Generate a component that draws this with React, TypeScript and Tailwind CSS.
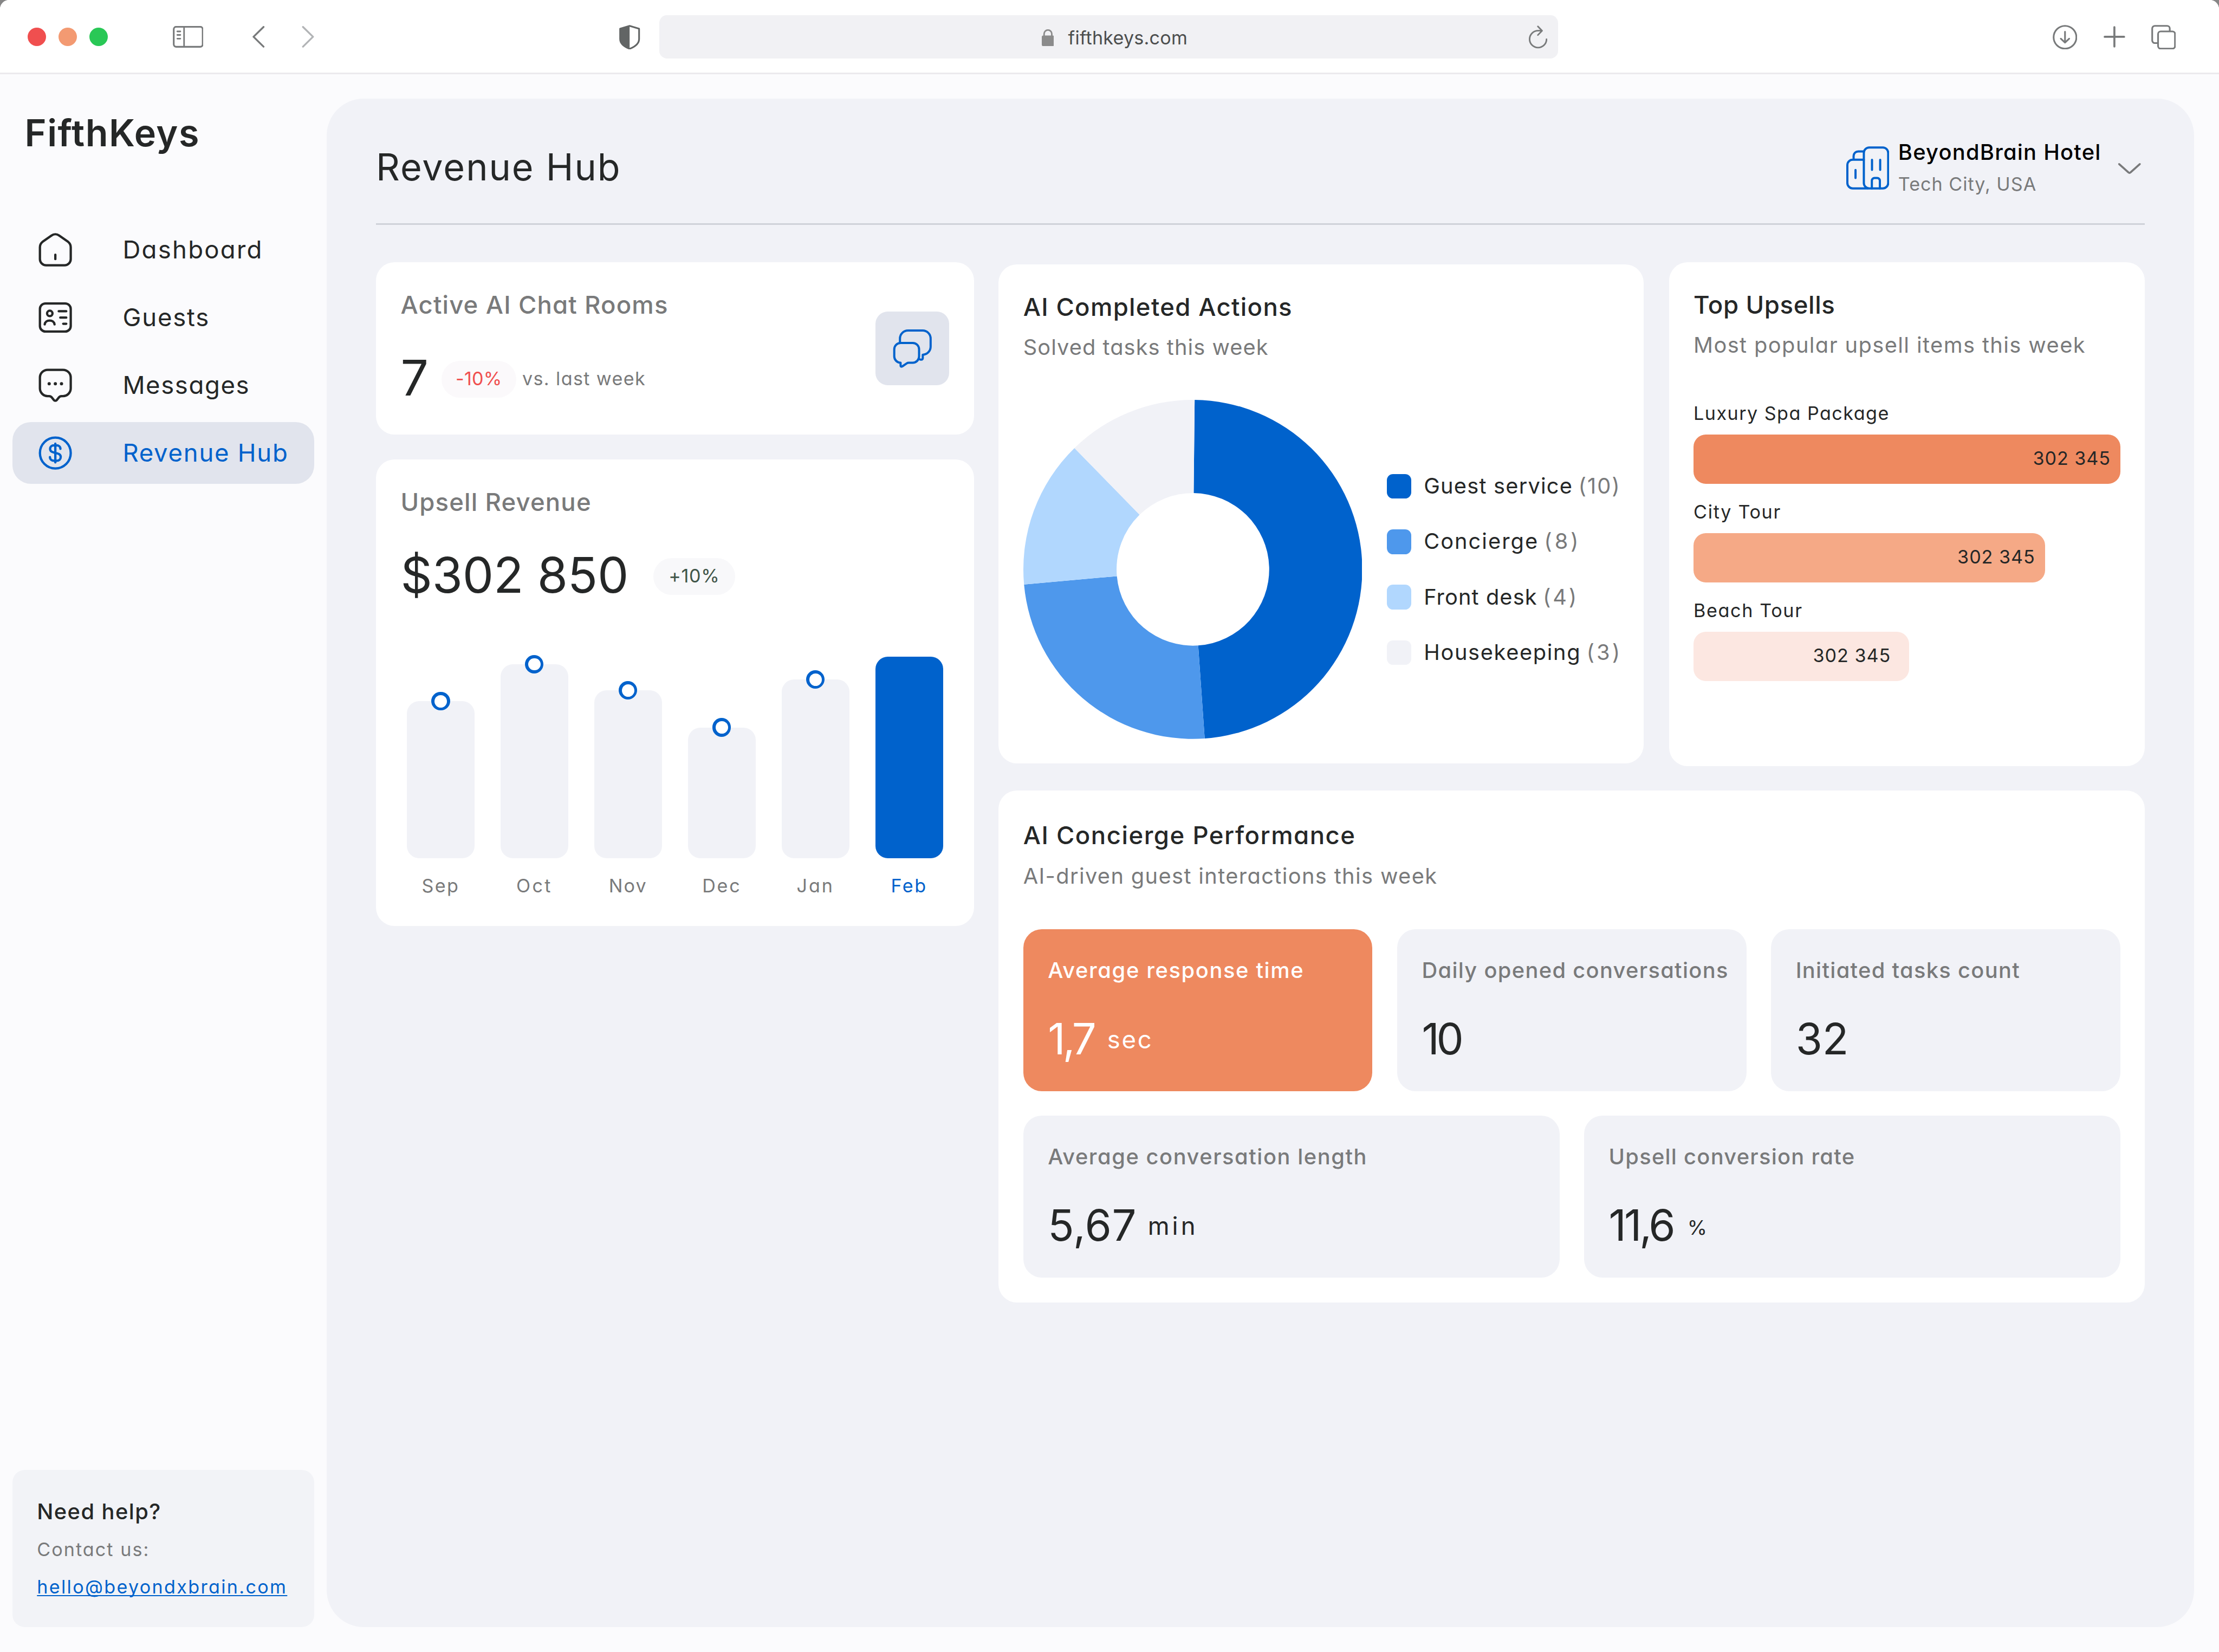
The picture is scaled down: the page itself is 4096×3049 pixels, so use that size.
import React from "react";

const months = [
  { name: "Sep", bar: "h-[102px]", label: "tracking-[0.07em]" },
  { name: "Oct", bar: "h-[126px]", label: "tracking-[0.1em]" },
  { name: "Nov", bar: "h-[109px]", label: "tracking-[0.065em]" },
  { name: "Dec", bar: "h-[85px]", label: "tracking-[0.08em]" },
  { name: "Jan", bar: "h-[116px]", label: "tracking-[0.085em]" },
  { name: "Feb", bar: "h-[131px]", label: "tracking-[0.075em]", current: true },
];

const actions = [
  { name: "Guest service", count: "(10)", swatch: "bg-[#0062cc]", text: "tracking-[0.030em]", num: "tracking-[0.050em]" },
  { name: "Concierge", count: "(8)", swatch: "bg-[#4e98ec]", text: "tracking-[0.050em]", num: "tracking-[0.120em]" },
  { name: "Front desk", count: "(4)", swatch: "bg-[#b1d7fe]", text: "tracking-[0.027em]", num: "tracking-[0.095em]" },
  { name: "Housekeeping", count: "(3)", swatch: "bg-[#f1f2f7]", text: "tracking-[0.041em]", num: "tracking-[0.100em]" },
];

const upsells = [
  { name: "Luxury Spa Package", text: "tracking-[0.043em]", bar: "w-[277px] bg-[#ee895f] pr-[6.300px]" },
  { name: "City Tour", text: "tracking-[0.050em]", bar: "w-[228px] bg-[#f5a986] pr-[6.300px]" },
  { name: "Beach Tour", text: "tracking-[0.048em]", bar: "w-[140px] bg-[#fce7e1] pr-[12px]" },
];

const slices = [
  { from: 0.6, to: 176, color: "#0062cc" },
  { from: 176, to: 264.9, color: "#4e98ec" },
  { from: 264.9, to: 315.7, color: "#b1d7fe" },
  { from: 315.7, to: 360.6, color: "#f1f2f7" },
];

function slicePath(from: number, to: number) {
  const p = (deg: number, r: number) => {
    const a = (deg * Math.PI) / 180;
    return `${(110 + r * Math.sin(a)).toFixed(2)} ${(110 - r * Math.cos(a)).toFixed(2)}`;
  };
  const big = to - from > 180 ? 1 : 0;
  return `M${p(from, 110)}A110 110 0 ${big} 1 ${p(to, 110)}L${p(to, 49.5)}A49.5 49.5 0 ${big} 0 ${p(from, 49.5)}Z`;
}

function BrowserBar() {
  return (
    <header className="flex flex-col h-12 bg-white rounded-t-[6px] shrink-0">
      <div className="flex items-center h-[47px] pt-px pl-[18px] pr-7 text-[#787a7b]">
        <div className="flex gap-2">
          <i className="size-3 rounded-full bg-[#f04f4f]" />
          <i className="size-3 rounded-full bg-[#f39a72]" />
          <i className="size-3 rounded-full bg-[#29c856]" />
        </div>
        <svg className="ml-[42px] w-5 h-[14px]" viewBox="0 0 20 14" fill="none" stroke="currentColor">
          <rect x=".6" y=".5" width="18.8" height="13" rx="1.6" strokeWidth="1.1" />
          <path d="M7.3.5v13" />
          <path d="M2.9 3.5h2M2.9 5.8h2M2.9 8.2h2" strokeLinecap="round" />
        </svg>
        <svg className="ml-8 w-2 h-[14px]" viewBox="0 0 8 14" fill="none" stroke="currentColor" strokeWidth="1.2" strokeLinecap="round" strokeLinejoin="round">
          <path d="M7.2.6.7 7l6.5 6.4" />
        </svg>
        <svg className="ml-6 w-2 h-[14px] text-[#b2b4b6]" viewBox="0 0 8 14" fill="none" stroke="currentColor" strokeWidth="1.2" strokeLinecap="round" strokeLinejoin="round">
          <path d="M.8.6 7.3 7 .8 13.4" />
        </svg>
        <svg className="ml-[198px] w-[13.5px] h-4" viewBox="0 0 13.5 16" fill="none" stroke="#626565" strokeLinejoin="round">
          <path d="M6.75.6 12.9 2.5v6.6c0 2.6-2.4 4.9-6.15 6.4C3 14 .6 11.7.6 9.1V2.5z" strokeWidth="1.1" />
          <path d="M6.75.6.6 2.5v6.6c0 2.6 2.4 4.9 6.15 6.4z" fill="#626565" stroke="none" />
        </svg>
        <div className="ml-[12.5px] w-[583px] h-7 rounded-[5px] bg-[#f1f1f4] flex items-center pl-[248px] pr-[7px]">
          <svg className="w-2 h-[11px] mt-px" viewBox="0 0 8 11" fill="none">
            <rect y="4" width="8" height="7" rx="1" fill="#8b8b8b" />
            <path d="M1.5 4.5V3a2.5 2.5 0 0 1 5 0v1.5" stroke="#8b8b8b" />
          </svg>
          <span className="ml-[9.2px] pt-px text-[12px] leading-4 tracking-[0.006em] text-[#4c4e4e] [font-feature-settings:normal]">fifthkeys.com</span>
          <svg className="ml-auto w-3 h-[15px]" viewBox="0 0 12 15" fill="none" stroke="#787a7b" strokeWidth="1" strokeLinecap="round" strokeLinejoin="round">
            <path d="M11.5 8.9A5.5 5.5 0 1 1 6 3.4h2.4M5.9.6l2.7 2.8-2.7 2.8" />
          </svg>
        </div>
        <svg className="ml-auto size-4" viewBox="0 0 16 16" fill="none" stroke="currentColor" strokeWidth="1.1" strokeLinecap="round" strokeLinejoin="round">
          <circle cx="8" cy="8" r="7.4" />
          <path d="M8 4.4v7M5.3 8.9 8 11.5l2.7-2.6" />
        </svg>
        <svg className="ml-[17px] size-[14px]" viewBox="0 0 14 14" stroke="currentColor" strokeWidth="1.3" strokeLinecap="round">
          <path d="M7 .7v12.6M.7 7h12.6" />
        </svg>
        <svg className="ml-[17px] size-4" viewBox="0 0 16 16" fill="none" stroke="currentColor" strokeWidth="1.1">
          <rect x="4.4" y="4.2" width="11" height="11.2" rx="1.7" />
          <path d="M4.4 11.8H2.3A1.7 1.7 0 0 1 .6 10.1V2.3A1.7 1.7 0 0 1 2.3.6h8A1.7 1.7 0 0 1 12 2.3v1.900" />
        </svg>
      </div>
      <div className="h-px bg-[#ebeaed]" />
    </header>
  );
}

const iconProps = {
  className: "size-6",
  viewBox: "0 0 24 24",
  fill: "none",
  stroke: "currentColor",
  strokeWidth: 1.5,
  strokeLinecap: "round" as const,
  strokeLinejoin: "round" as const,
};

function HomeIcon() {
  return (
    <svg {...iconProps}>
      <path d="M2 10.4c0-1.600.5-2.7 1.7-3.6l5.8-4.1c1.5-1.05 3.5-1.05 5 0l5.8 4.1c1.2.9 1.7 2 1.7 3.6V18a4 4 0 0 1-4 4H6a4 4 0 0 1-4-4z" />
      <path d="M12 15.2V18" />
    </svg>
  );
}

function GuestsIcon() {
  return (
    <svg {...iconProps}>
      <rect x="2" y="2.85" width="20" height="18.2" rx="3.6" />
      <circle cx="8.4" cy="9.3" r="1.75" />
      <path d="M5.1 16.4c.2-1.6 1.5-2.5 3.2-2.5s3 .9 3.2 2.5M14.2 7.9h4.9M15.2 12h3.9M17.1 16h2" />
    </svg>
  );
}

function MessagesIcon() {
  return (
    <svg {...iconProps}>
      <path d="M2 7a5 5 0 0 1 5-5h10a5 5 0 0 1 5 5v7a5 5 0 0 1-5 5h-.9c-.9 0-1.5.3-1.9 1L13 21.5c-.5.7-1.5.7-2 0L9.8 20c-.4-.7-1-1-1.9-1H7a5 5 0 0 1-5-5z" />
      <path d="M8 11h.01M12 11h.01M16 11h.01" strokeWidth="2.1" />
    </svg>
  );
}

function RevenueIcon() {
  return (
    <svg {...iconProps}>
      <circle cx="12" cy="12" r="10" />
      <path d="M15.3 9.3c0-1.5-1.2-2.3-2.6-2.3h-1.4C9.7 7 8.6 7.9 8.6 9.3c0 1.3.8 1.9 2 2.2l2.9.8c1.2.3 2 1 2 2.3 0 1.5-1.2 2.4-2.6 2.4h-1.7c-1.5 0-2.7-.9-2.7-2.4M12 5.9v12.2" />
    </svg>
  );
}

function Sidebar() {
  return (
    <aside className="w-[196px] shrink-0 flex flex-col">
      <div className="mt-[4.3px] pl-2 text-2xl leading-9 font-semibold tracking-[0.022em]">FifthKeys</div>
      <nav className="mt-[37.7px] flex flex-col gap-1 text-base whitespace-nowrap">
        <a className="flex items-center gap-8 h-10 pl-4 rounded-xl"><HomeIcon /><span className="-ml-[0.4px] tracking-[0.050em]">Dashboard</span></a>
        <a className="flex items-center gap-8 h-10 pl-4 rounded-xl"><GuestsIcon /><span className="-ml-[0.4px] tracking-[0.040em]">Guests</span></a>
        <a className="flex items-center gap-8 h-10 pl-4 rounded-xl"><MessagesIcon /><span className="-ml-[0.4px] tracking-[0.035em]">Messages</span></a>
        <a className="flex items-center gap-8 h-10 pl-4 rounded-xl bg-[#e1e4ed] text-[#0062cc]"><RevenueIcon /><span className="-ml-[0.4px] tracking-[0.038em]">Revenue Hub</span></a>
      </nav>
      <div className="mt-auto h-[102px] p-4 rounded-lg bg-[#f2f3f7]">
        <div className="text-sm leading-[22px] font-medium tracking-[0.036em]">Need help?</div>
        <div className="mt-[4.6px] text-xs leading-[18px] tracking-[0.060em] text-[#797a7b]">Contact us:</div>
        <div className="mt-1.5 text-xs leading-[18px] tracking-[0.068em] whitespace-nowrap text-[#0062cc] underline decoration-[0.7px] underline-offset-[1.2px] [text-decoration-skip-ink:none]">hello@beyondxbrain.com</div>
      </div>
    </aside>
  );
}

function PageHeader() {
  return (
    <div>
      <div className="flex items-center justify-between h-[81px] pt-[9px]">
        <h1 className="pb-px text-2xl leading-9 tracking-[0.029em]">Revenue Hub</h1>
        <div className="flex items-center mr-0.5">
          <svg className="size-7" viewBox="0 0 28 28" fill="none" stroke="#0062cc" strokeWidth="1.4" strokeLinecap="round" strokeLinejoin="round">
            <rect x="11.4" y=".8" width="15.8" height="26.5" rx="3.5" />
            <path d="M14 27.3H4.2a3.5 3.5 0 0 1-3.5-3.5V12.2a3.5 3.5 0 0 1 3.5-3.5h7.2M4.75 8.7V6.3a3 3 0 0 1 3-3h3.65" />
            <path d="M16.7 8.8v6.5M22 8.8v6.5M6 15.4v5.2M16.6 27.3v-5a1.7 1.7 0 0 1 1.7-1.7h1.8a1.7 1.7 0 0 1 1.7 1.7v5" />
          </svg>
          <div className="ml-[5.8px] w-[132px] pt-px whitespace-nowrap">
            <div className="text-sm leading-5 font-medium tracking-[0.031em] text-black">BeyondBrain Hotel</div>
            <div className="text-xs leading-[21px] tracking-[0.029em] text-[#797a7b]">Tech City, USA</div>
          </div>
          <svg className="ml-[10.2px] mt-px w-4 h-2" viewBox="0 0 16 8" fill="none" stroke="#797a7b" strokeWidth="1.3" strokeLinecap="round" strokeLinejoin="round">
            <path d="m1.3 1 6 5.4q.7.6 1.4 0l6-5.4" />
          </svg>
        </div>
      </div>
      <div className="h-px bg-[#cfd2d9]" />
    </div>
  );
}

function ChatRooms() {
  return (
    <section className="flex justify-between items-center h-28 px-4 rounded-xl bg-white">
      <div className="self-start pt-4">
        <h2 className="text-base leading-6 font-medium tracking-[0.025em] text-[#797a7b]">Active AI Chat Rooms</h2>
        <div className="mt-6 flex items-center h-6">
          <span className="w-[26.5px] pb-[1.5px] text-[32px] leading-none">7</span>
          <span className="w-[48.4px] h-6 pb-px rounded-full bg-[#fbf9fb] flex items-center justify-center text-xs tracking-[0.006em] text-[#f04f4f]">-10%</span>
          <span className="ml-1 pb-px text-xs tracking-[0.040em] text-[#797a7b]">vs. last week</span>
        </div>
      </div>
      <div className="size-12 rounded-lg bg-[#e1e4ed]">
        <svg className="size-12" viewBox="0 0 48 48" fill="none" stroke="#0062cc" strokeWidth="1.4" strokeLinecap="round" strokeLinejoin="round">
          <path d="M16.3 33.2a4.1 4.1 0 0 1-4.1-4.1v-4.6a4.1 4.1 0 0 1 4.1-4.1h7.9a4.1 4.1 0 0 1 4.1 4.1v4.6a4.1 4.1 0 0 1-4.1 4.1h-2.6q-.7 0-1.3.4l-2.9 2q-1.1.5-1.1-.6z" />
          <path d="M15.9 20.4v-2.9a5.2 5.2 0 0 1 5.2-5.2h9.5a5.2 5.2 0 0 1 5.2 5.2v5.3a5.2 5.2 0 0 1-5.1 5.2v2.2q0 1.2-1.2 1h-.3l-1.2-.5" />
        </svg>
      </div>
    </section>
  );
}

function UpsellRevenue() {
  return (
    <section className="h-[303px] pt-4 rounded-xl bg-white">
      <h2 className="px-4 text-base leading-6 font-medium tracking-[0.025em] text-[#797a7b]">Upsell Revenue</h2>
      <div className="mt-6 px-4 flex items-center h-6">
        <span className="w-[164px] pb-[1.5px] text-[32px] leading-none tracking-[-0.002em]">$302 850</span>
        <span className="w-[53px] h-6 pb-px rounded-full bg-[#f8f8fa] flex items-center justify-center text-xs tracking-[0.022em] text-[#3f5548]">+10%</span>
      </div>
      <div className="mt-10 px-5 flex justify-between items-end h-[131px]">
        {months.map((m) => (
          <div key={m.name} className={`relative w-11 rounded-lg ${m.bar} ${m.current ? "bg-[#0062cc]" : "bg-[#f1f2f7]"}`}>
            {!m.current && <i className="absolute left-4 -top-1.5 size-3 rounded-full bg-[#0062cc] p-0.5"><i className="block size-2 rounded-full bg-white" /></i>}
          </div>
        ))}
      </div>
      <div className="mt-[8.6px] px-5 flex justify-between">
        {months.map((m) => (
          <span key={m.name} className={`w-11 text-center text-xs leading-[18px] ${m.label} ${m.current ? "text-[#0062cc]" : "text-[#797a7b]"}`}>{m.name}</span>
        ))}
      </div>
    </section>
  );
}

function CompletedActions() {
  return (
    <section className="w-[418.6px] h-[324px] p-4 rounded-xl bg-white">
      <h2 className="text-base leading-6 font-medium tracking-[0.029em]">AI Completed Actions</h2>
      <p className="mt-1 text-sm leading-5 tracking-[0.026em] text-[#797a7b]">Solved tasks this week</p>
      <div className="mt-6 flex items-center gap-4">
        <svg className="size-[220px] shrink-0" viewBox="0 0 220 220">
          {slices.map((s) => (
            <path key={s.color} d={slicePath(s.from, s.to)} fill={s.color} />
          ))}
        </svg>
        <ul className="flex flex-col gap-5 text-sm">
          {actions.map((a) => (
            <li key={a.name} className="flex items-center h-4 whitespace-nowrap">
              <i className={`size-4 shrink-0 rounded ${a.swatch}`} />
              <span className={`ml-2 ${a.text}`}>{a.name}</span>
              <span className={`ml-[3.6px] text-[#797a7b] ${a.num}`}>{a.count}</span>
            </li>
          ))}
        </ul>
      </div>
    </section>
  );
}

function TopUpsells() {
  return (
    <section className="w-[309px] h-[327px] p-4 rounded-xl bg-white">
      <h2 className="text-base leading-6 font-medium tracking-[0.014em]">Top Upsells</h2>
      <p className="mt-1 mb-4 text-sm leading-5 tracking-[0.035em] whitespace-nowrap text-[#797a7b]">Most popular upsell items this week</p>
      {upsells.map((u) => (
        <div key={u.name}>
          <div className={`pt-[9px] pb-[5px] text-xs leading-[18px] ${u.text}`}>{u.name}</div>
          <div className={`flex items-center justify-end h-8 pb-px rounded-lg text-xs tracking-[0.028em] ${u.bar}`}>302 345</div>
        </div>
      ))}
    </section>
  );
}

type TileProps = {
  label: string;
  value: string;
  labelStyle: string;
  valueStyle: string;
  unit?: string;
  unitStyle?: string;
  highlight?: boolean;
};

function Tile({ label, value, labelStyle, valueStyle, unit, unitStyle = "", highlight }: TileProps) {
  return (
    <div className={`flex-1 min-w-0 h-[105px] p-4 rounded-xl ${highlight ? "bg-[#ee895f] text-white" : "bg-[#f1f2f7]"}`}>
      <div className={`text-sm leading-[21px] font-medium whitespace-nowrap ${labelStyle} ${highlight ? "" : "text-[#797a7b]"}`}>{label}</div>
      <div className="mt-4 flex items-center h-9">
        <span className={`text-[28px] leading-9 ${valueStyle}`}>{value}</span>
        {unit && <span className={unitStyle}>{unit}</span>}
      </div>
    </div>
  );
}

function Performance() {
  return (
    <section className="h-[332px] px-4 pt-[17px] rounded-xl bg-white">
      <h2 className="text-base leading-6 font-medium tracking-[0.033em]">AI Concierge Performance</h2>
      <p className="mt-[4.8px] text-sm leading-5 tracking-[0.034em] text-[#797a7b]">AI-driven guest interactions this week</p>
      <div className="mt-[24.2px] flex gap-4">
        <Tile highlight label="Average response time" labelStyle="tracking-[0.041em]" value="1,7" valueStyle="w-[38.5px] tracking-[-0.060em]" unit="sec" unitStyle="pt-[1.4px] text-base tracking-[0.060em]" />
        <Tile label="Daily opened conversations" labelStyle="tracking-[0.033em]" value="10" valueStyle="tracking-[-0.067em]" />
        <Tile label="Initiated tasks count" labelStyle="tracking-[0.033em]" value="32" valueStyle="tracking-normal" />
      </div>
      <div className="mt-4 flex gap-4">
        <Tile label="Average conversation length" labelStyle="tracking-[0.039em]" value="5,67" valueStyle="w-[64.9px] tracking-[0.007em]" unit="min" unitStyle="pt-[1.6px] text-base tracking-[0.110em]" />
        <Tile label="Upsell conversion rate" labelStyle="tracking-[0.032em]" value="11,6" valueStyle="w-[51px] tracking-[-0.050em]" unit="%" unitStyle="pt-[3px] text-[13px]" />
      </div>
    </section>
  );
}

export default function App() {
  return (
    <div className="w-[1440px] h-[1071.9px] overflow-hidden bg-[#868686] [zoom:2.84444]">
      <div className="flex flex-col h-full rounded-t-[6px] bg-[#fbfbfd] font-['Inter',sans-serif] text-[#252727] [font-feature-settings:'cv11']">
        <BrowserBar />
        <div className="flex-1 min-h-0 flex gap-2 pt-4 pl-2 pr-4 pb-4">
          <Sidebar />
          <main className="flex-1 min-w-0 rounded-3xl bg-[#f1f2f7] px-8">
            <PageHeader />
            <div className="mt-6 flex gap-4">
              <div className="w-[388px] shrink-0 flex flex-col gap-4">
                <ChatRooms />
                <UpsellRevenue />
              </div>
              <div className="flex-1 min-w-0 flex flex-col gap-4">
                <div className="flex items-center justify-between">
                  <CompletedActions />
                  <TopUpsells />
                </div>
                <Performance />
              </div>
            </div>
          </main>
        </div>
      </div>
    </div>
  );
}
